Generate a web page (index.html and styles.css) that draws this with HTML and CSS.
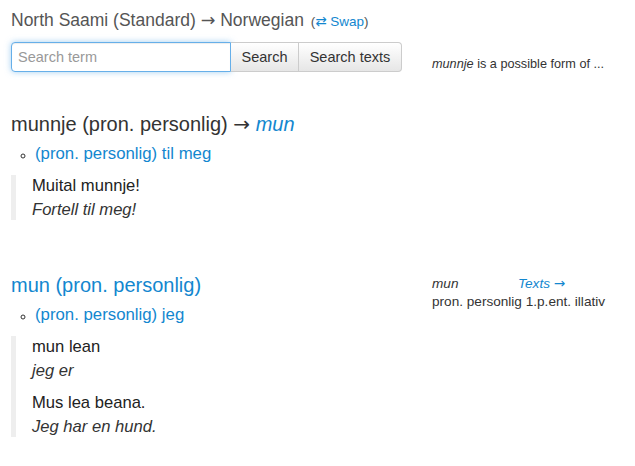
FILE: index.html
```html
<!DOCTYPE html>
<html>
<head>
<meta charset="utf-8">
<link rel="stylesheet" href="styles.css">
</head>
<body>
<div class="page">
  <div class="row top-row">
    <div class="main">
      <h3 class="pair">North Saami (Standard) <span class="arr">→</span> Norwegian <small class="swap">(<a href="#"><span class="sym">⇄</span> Swap</a>)</small></h3>
      <form class="search">
        <input class="term" type="text" placeholder="Search term">
        <button type="button" class="btn btn-mid">Search</button>
        <button type="button" class="btn btn-last">Search texts</button>
      </form>
    </div>
    <div class="side">
      <p class="hint"><em>munnje</em> is a possible form of ...</p>
    </div>
  </div>

  <div class="row entry-row first-entry">
    <div class="main">
      <h2 class="lemma">munnje (pron. personlig) <span class="arr">→</span> <a href="#" class="ital">mun</a></h2>
      <ul class="senses">
        <li><a href="#">(pron. personlig) til meg</a></li>
      </ul>
      <blockquote class="examples">
        <p class="src">Muital munnje!</p>
        <p class="tr">Fortell til meg!</p>
      </blockquote>
    </div>
    <div class="side"></div>
  </div>

  <div class="row entry-row second-entry">
    <div class="main">
      <h2 class="lemma link-lemma"><a href="#">mun (pron. personlig)</a></h2>
      <ul class="senses">
        <li><a href="#">(pron. personlig) jeg</a></li>
      </ul>
      <blockquote class="examples">
        <p class="src">mun lean</p>
        <p class="tr">jeg er</p>
        <p class="src gap">Mus lea beana.</p>
        <p class="tr">Jeg har en hund.</p>
      </blockquote>
    </div>
    <div class="side analysis">
      <div class="an-head"><em class="an-word">mun</em><a href="#" class="texts">Texts <span class="arr">→</span></a></div>
      <div class="an-tags">pron. personlig 1.p.ent. illativ</div>
    </div>
  </div>
</div>
</body>
</html>
```

FILE: styles.css
```css
* { box-sizing: border-box; }
html, body { margin: 0; padding: 0; background: #fff; }
body {
  font-family: "Liberation Sans", Arial, sans-serif;
  color: #333;
  font-size: 15px;
  line-height: 20px;
}
a { color: #1387cf; text-decoration: none; }
.arr { font-family: "DejaVu Sans", sans-serif; font-style: normal; line-height: 0; }
.page { padding: 0 0 0 11px; }
.row { display: grid; grid-template-columns: 410px 1fr; column-gap: 11px; }
.main { min-width: 0; }

.pair {
  margin: 0;
  padding-top: 10px;
  font-size: 17.5px;
  font-weight: normal;
  color: #555;
  line-height: 20px;
}
.swap { font-size: 13.5px; color: #555; margin-left: 2px; line-height: 0; }
.swap a { color: #1387cf; }
.sym { font-family: "DejaVu Sans", sans-serif; line-height: 0; }

.search { display: flex; margin-top: 12px; height: 30px; }
.term {
  width: 220px;
  height: 30px;
  border: 1px solid #66afe9;
  border-radius: 4px 0 0 4px;
  box-shadow: inset 0 1px 1px rgba(0,0,0,.075), 0 0 6px rgba(102,175,233,.6);
  padding: 4px 6px;
  font: 14.5px "Liberation Sans", Arial, sans-serif;
  color: #555;
  outline: none;
}
.term::placeholder { color: #999; }
.btn {
  height: 30px;
  font: 14.5px "Liberation Sans", Arial, sans-serif;
  color: #333;
  background: linear-gradient(#fff, #e6e6e6);
  border: 1px solid #ccc;
  border-left: 0;
  padding: 0 8px;
  margin: 0;
}
.btn-mid { width: 68px; border-radius: 0; }
.btn-last { width: 103px; border-radius: 0 4px 4px 0; }

.hint { margin: 54px 0 0; font-size: 12.7px; color: #333; }

.first-entry { margin-top: 37px; }
.second-entry { margin-top: 52px; }

.lemma {
  margin: 0;
  font-size: 20px;
  font-weight: normal;
  line-height: 26px;
  color: #333;
}
.ital { font-style: italic; }

.senses {
  list-style: circle;
  margin: 7px 0 0;
  padding-left: 24px;
  font-size: 16.8px;
  line-height: 20px;
}
.senses li::marker { color: #333; font-size: 12px; }

.examples {
  margin: 11px 0 0;
  border-left: 5px solid #eee;
  padding: 0 0 0 16px;
  font-size: 16.6px;
}
.examples p { margin: 0; }
.examples .src { color: #222; line-height: 22px; }
.examples .tr { font-style: italic; color: #333; line-height: 20px; margin-top: 3px; }
.examples .gap { margin-top: 11px; }

.analysis { padding-top: 3px; font-size: 13.6px; line-height: 18px; }
.an-head { display: flex; }
.an-word { width: 86px; }
.texts { font-style: italic; }
```
